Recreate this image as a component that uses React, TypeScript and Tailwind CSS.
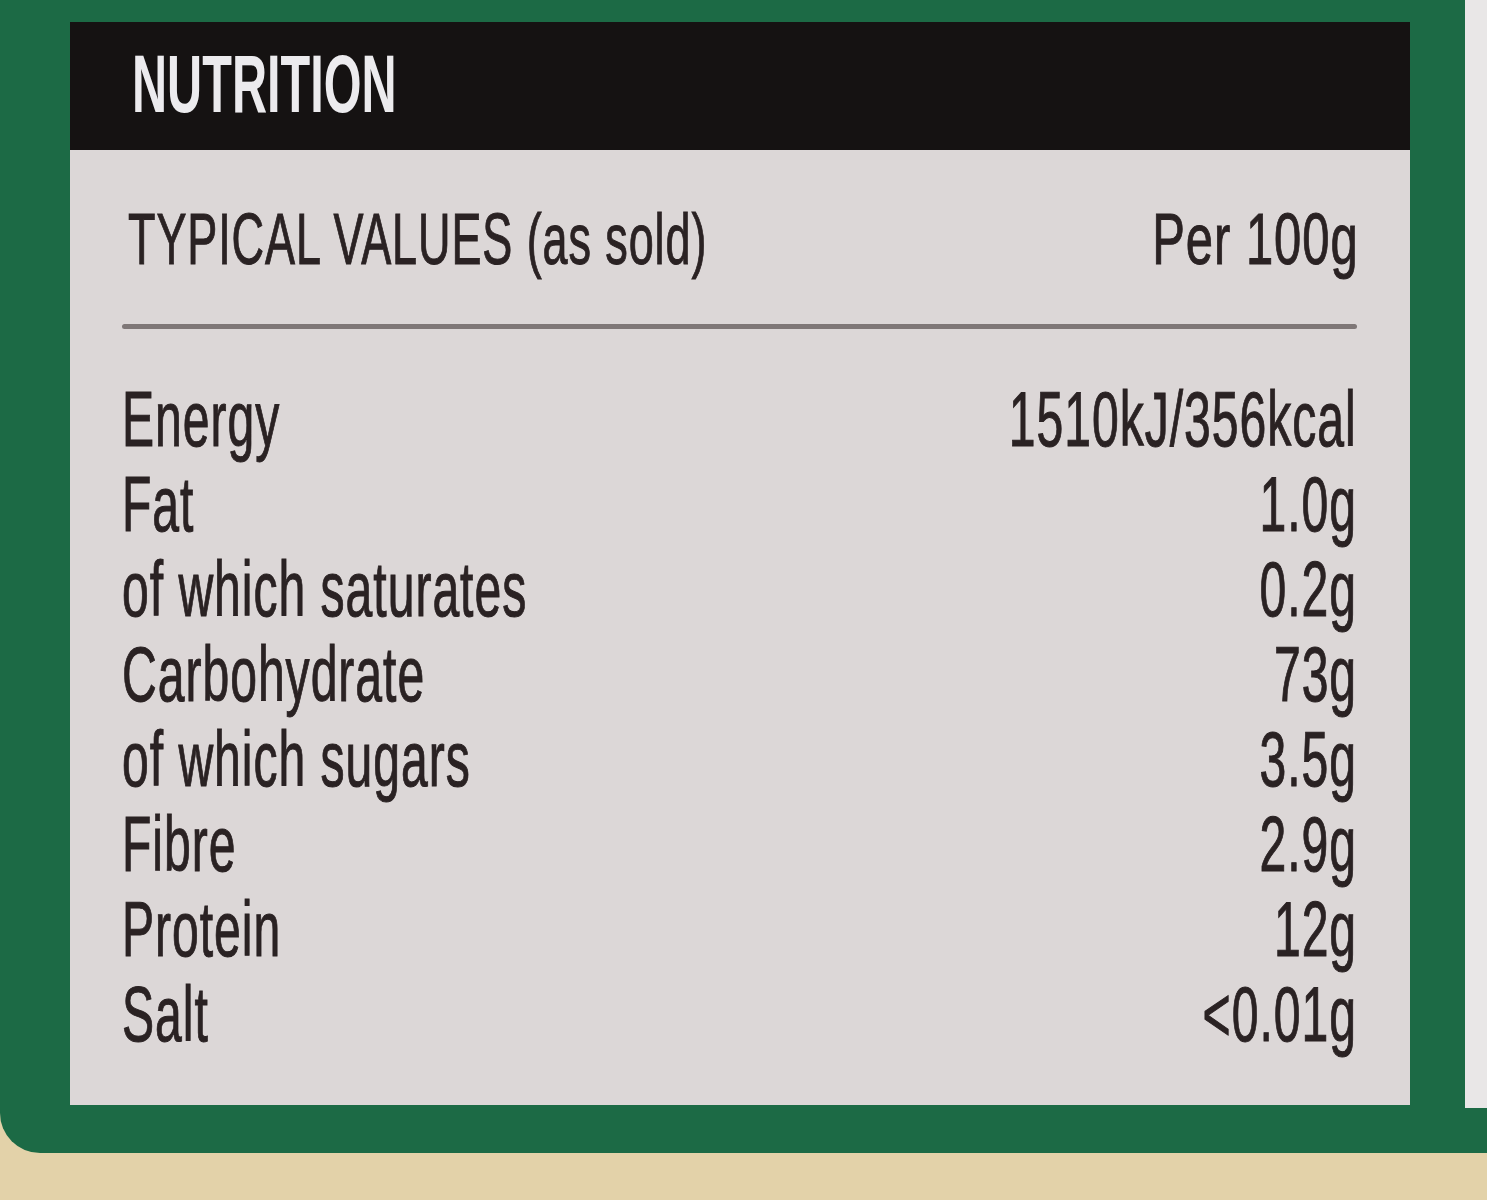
import React from 'react';

const rows: [string, string][] = [
  ['Energy', '1510kJ/356kcal'],
  ['Fat', '1.0g'],
  ['of which saturates', '0.2g'],
  ['Carbohydrate', '73g'],
  ['of which sugars', '3.5g'],
  ['Fibre', '2.9g'],
  ['Protein', '12g'],
  ['Salt', '<0.01g'],
];

export default function App() {
  return (
    <div className="h-[1200px] w-full overflow-hidden bg-[#e3d2a9] font-['Liberation_Sans',Arial,sans-serif]">
      <div className="flex h-[1153px] items-start rounded-bl-[40px] bg-[#1c6a45] pl-[70px]">
        {/* label panel */}
        <div className="mt-[22px] flex h-[1083px] w-[1340px] shrink-0 flex-col bg-[#dcd7d7]">
          <div className="h-[128px] bg-[#151212] pl-[62px] pt-[22px]">
            <span className="inline-block origin-left scale-x-[0.6] whitespace-nowrap text-[81px] font-bold leading-none text-[#ecebee]">
              NUTRITION
            </span>
          </div>

          <div className="flex flex-col pl-[52px] pr-[53px] pt-[53px] text-[#2a2223] [-webkit-text-stroke:1px_#2a2223]">
            <div className="flex justify-between text-[72px] leading-none tracking-[0.02em]">
              <span className="ml-[6px] inline-block origin-left scale-x-[0.625] whitespace-nowrap">
                TYPICAL VALUES (as sold)
              </span>
              <span className="inline-block origin-right scale-x-[0.68] whitespace-nowrap">Per 100g</span>
            </div>

            <div className="mt-[49px] h-[5px] rounded-full bg-[#7f7777]" />

            <div className="mt-[48px] flex flex-col">
              {rows.map(([label, value]) => (
                <div key={label} className="flex h-[85px] justify-between text-[77px] leading-[85px] tracking-[0.02em]">
                  <span className="inline-block origin-left scale-x-[0.625] whitespace-nowrap">{label}</span>
                  <span className="inline-block origin-right scale-x-[0.625] whitespace-nowrap">{value}</span>
                </div>
              ))}
            </div>
          </div>
        </div>

        {/* next panel edge */}
        <div className="ml-[55px] h-[1108px] flex-1 bg-[#e9e7e7]" />
      </div>
    </div>
  );
}
